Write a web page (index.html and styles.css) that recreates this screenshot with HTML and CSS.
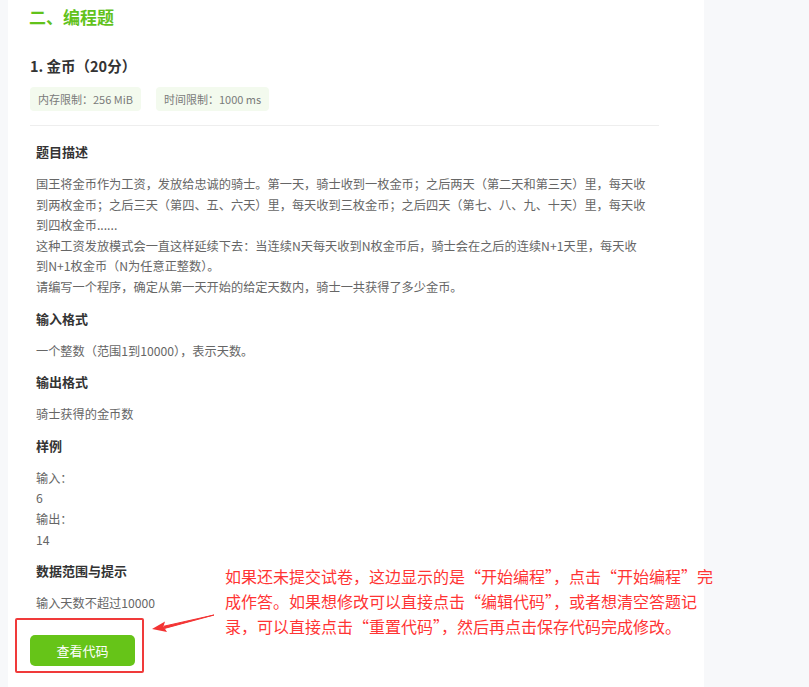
FILE: index.html
```html
<!DOCTYPE html>
<html lang="zh-CN">
<head>
  <meta charset="UTF-8" />
  <meta name="viewport" content="width=device-width, initial-scale=1" />
  <title>编程题</title>
  <link rel="stylesheet" href="styles.css">
</head>
<body>
  <div class="page">
    <div class="main">
      <h2 class="part-title">二、编程题</h2>

      <div class="question">
        <h3 class="question-title">1. 金币（20分）</h3>
        <div class="limits">
          <span class="limit-tag">内存限制：256 MiB</span>
          <span class="limit-tag">时间限制：1000 ms</span>
        </div>
        <div class="divider"></div>

        <div class="problem">
          <h4 class="block-title">题目描述</h4>
          <p class="block-text">国王将金币作为工资，发放给忠诚的骑士。第一天，骑士收到一枚金币；之后两天（第二天和第三天）里，每天收到两枚金币；之后三天（第四、五、六天）里，每天收到三枚金币；之后四天（第七、八、九、十天）里，每天收到四枚金币......<br>这种工资发放模式会一直这样延续下去：当连续N天每天收到N枚金币后，骑士会在之后的连续N+1天里，每天收到N+1枚金币（N为任意正整数）。<br>请编写一个程序，确定从第一天开始的给定天数内，骑士一共获得了多少金币。</p>

          <h4 class="block-title">输入格式</h4>
          <p class="block-text">一个整数（范围1到10000），表示天数。</p>

          <h4 class="block-title">输出格式</h4>
          <p class="block-text">骑士获得的金币数</p>

          <h4 class="block-title">样例</h4>
          <p class="block-text">输入：<br>6<br>输出：<br>14</p>

          <h4 class="block-title">数据范围与提示</h4>
          <p class="block-text">输入天数不超过10000</p>
        </div>

        <div class="actions">
          <button class="view-code">查看代码</button>
        </div>
      </div>
    </div>
    <div class="side"></div>
  </div>

  <!-- annotation overlay -->
  <div class="mark-box"></div>
  <svg class="mark-arrow" width="70" height="30" viewBox="0 0 70 30">
    <path d="M64 2 L14 13.2 L14.6 15.4 Z" fill="#f33333" stroke="#f33333" stroke-width="1" stroke-linejoin="round"/>
    <path d="M2 16 L15 8.5 L13.5 13.6 L17 19 Z" fill="#f33333"/>
  </svg>
  <div class="note">
    <span>如果还未提交试卷，这边显示的是“开始编程”，点击“开始编程”完</span>
    <span>成作答。如果想修改可以直接点击“编辑代码”，或者想清空答题记</span>
    <span>录，可以直接点击“重置代码”，然后再点击保存代码完成修改。</span>
  </div>
</body>
</html>
```

FILE: styles.css
```css
* {
  margin: 0;
  padding: 0;
  box-sizing: border-box;
}

body {
  font-family: "Noto Sans CJK SC", "Noto Sans", sans-serif;
  background-color: #f7f8fa;
  color: #333;
  height: 100vh;
  overflow: hidden;
}

.page {
  display: flex;
  height: 100vh;
  padding-left: 8px;
}

.main {
  width: 696px;
  background-color: #fff;
  padding: 6px 0 0 21px;
}

.side {
  flex: 1;
}

.part-title {
  font-size: 17px;
  line-height: 22px;
  font-weight: 700;
  color: #62c21b;
}

.question {
  padding-left: 1px;
  margin-top: 28px;
}

.question-title {
  font-size: 14.5px;
  line-height: 20px;
  font-weight: 700;
  color: #333;
}

.limits {
  display: flex;
  gap: 15px;
  margin-top: 11px;
}

.limit-tag {
  display: inline-block;
  height: 24px;
  line-height: 24px;
  padding: 0 8px;
  font-size: 11px;
  color: #7a7a7a;
  background-color: #f3faee;
  border-radius: 4px;
}

.divider {
  width: 629px;
  height: 1px;
  background-color: #eeeeee;
  margin-top: 14px;
}

.problem {
  padding-left: 6px;
  padding-top: 16px;
}

.block-title {
  font-size: 13px;
  line-height: 20px;
  font-weight: 700;
  color: #333;
  margin-top: 11px;
  margin-bottom: 12px;
}

.block-title:first-child {
  margin-top: 0;
}

.block-text {
  width: 612px;
  font-size: 12.2px;
  line-height: 20.6px;
  color: #666;
}

.actions {
  margin-top: 21px;
}

.view-code {
  width: 105px;
  height: 31px;
  border: none;
  border-radius: 5px;
  background-color: #66c418;
  color: #fff;
  font-family: inherit;
  font-size: 13px;
  cursor: pointer;
}

.mark-box {
  position: absolute;
  left: 15px;
  top: 618px;
  width: 129px;
  height: 55px;
  border: 2px solid #f03a3a;
  border-radius: 2px;
}

.mark-arrow {
  position: absolute;
  left: 150px;
  top: 613px;
}

.note {
  position: absolute;
  left: 225px;
  top: 564px;
  display: flex;
  flex-direction: column;
  font-size: 16px;
  line-height: 25px;
  color: #ff3434;
  white-space: nowrap;
}
```
